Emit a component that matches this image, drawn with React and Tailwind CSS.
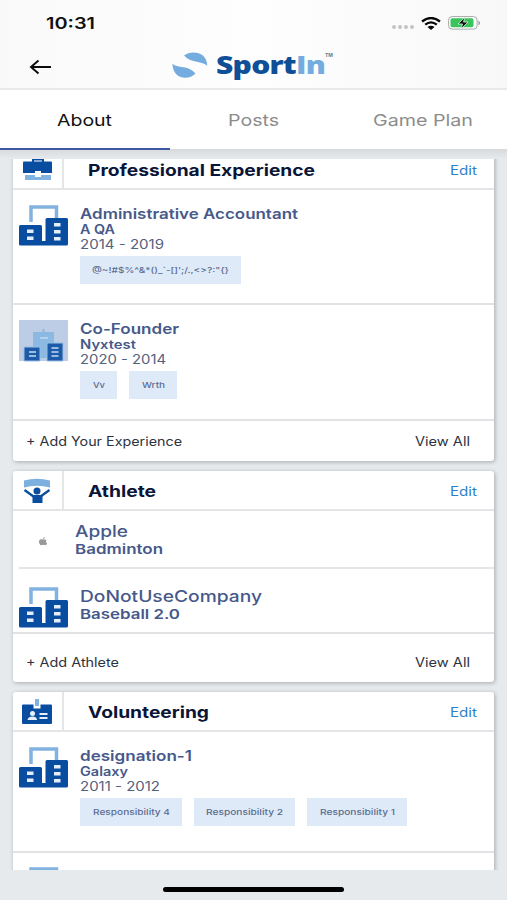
import { useLayoutEffect, useRef, useState } from 'react';

/**
 * Wide: single line of text stretched to the width of its box.
 */
const Wide = ({ className = '', children }) => {
  const boxRef = useRef(null);
  const textRef = useRef(null);
  const [scale, setScale] = useState(1);

  useLayoutEffect(() => {
    setScale(boxRef.current.offsetWidth / textRef.current.getBoundingClientRect().width);
  }, []);

  return (
    <span ref={boxRef} className={`block whitespace-nowrap ${className}`}>
      <span
        ref={textRef}
        className="inline-block origin-left"
        style={{ transform: `scaleX(${scale})` }}
      >
        {children}
      </span>
    </span>
  );
};

const BuildingIcon = () => (
  <svg width="50" height="42" viewBox="0 0 50 42" className="shrink-0">
    <path d="M12 17V2h25.500v12" fill="none" stroke="#82b2df" strokeWidth="3.500" />
    <path
      d="M1.500 20h20a1.500 1.500 0 0 1 1.500 1.500V36h3.500V14.500a1.500 1.500 0 0 1 1.500-1.500h19.500a1.500 1.500 0 0 1 1.500 1.500v24.500a1.500 1.500 0 0 1-1.500 1.500H1.500A1.500 1.500 0 0 1 0 39V21.500a1.500 1.500 0 0 1 1.500-1.500z"
      fill="#084d9f"
    />
    <path
      d="M8 24.500h6.500V28H8zM8 31.500h6.500V35H8zM35 18h6.500v3.500H35zM35 25h6.500v3.500H35zM35 32h6.500v3.500H35z"
      fill="#e4eefa"
    />
  </svg>
);

const CompanyPhoto = () => (
  <svg width="50" height="42" viewBox="0 0 50 42" className="shrink-0">
    <rect width="49" height="41" fill="#bccde5" />
    <path d="M14 12h9.500V9h2v3H35v26H14z" fill="#8bb9e2" />
    <path d="M21 18h8" stroke="#c3daf0" strokeWidth="1.500" />
    <path d="M5 27h16v14H5zM28 23h16v18H28z" fill="#1d5ba8" stroke="#9bbfe4" />
    <path d="M10 32h7M10 36h7M32.500 28h7M32.500 32h7M32.500 36h7" stroke="#c5dbf2" strokeWidth="1.300" />
  </svg>
);

const AppleIcon = () => (
  <svg width="10" height="9" viewBox="0 0 10 9" className="mt-1">
    <path
      d="M8.700 3.200C7.700 2.100 6.300 2.400 5.200 2.600 3.800 2 1.300 2.100 1 4.400 0.800 6.200 2 8.200 3.300 8.200c.8 0 1.100-.4 1.900-.4s1.100.4 1.900.4c.9 0 1.600-1 2-2C7.600 5.500 7.700 3.800 8.700 3.200zM5 2.100C5 1 5.800.4 7 .300 7 1.400 6.200 2 5 2.100z"
      fill="#999"
    />
  </svg>
);

const BriefcaseIcon = () => (
  <svg width="30" height="24" viewBox="0 0 30 24" className="mt-0.5 ml-0.5">
    <path d="M10 4V1.500h10V4" fill="none" stroke="#084d9f" strokeWidth="2" />
    <path d="M1 3.500h27q1 0 1 1V15H18v-2h-6v2H0V4.500q0-1 1-1z" fill="#084d9f" />
    <path d="M2 17h10v2h6v-2h10v5H2z" fill="#82b2df" />
  </svg>
);

const AthleteIcon = () => (
  <svg width="28" height="26" viewBox="0 0 28 26" className="mt-0.5">
    <path d="M1 2.500q13-3.500 26 0v7q-13-3.500-26 0z" fill="#7db0df" />
    <circle cx="14" cy="13" r="3.500" fill="#084d9f" />
    <path d="M1.500 12l9 6.500M26.500 12l-9 6.500" stroke="#084d9f" strokeWidth="2.200" />
    <path d="M8.500 17h11v8h-10v-6z" fill="#084d9f" />
  </svg>
);

const BadgeIcon = () => (
  <svg width="30" height="26" viewBox="0 0 30 26" className="mt-0.5">
    <path d="M1 5.500h10.500v4h7v-4H29q1 0 1 1V24q0 1-1 1H1q-1 0-1-1V6.500q0-1 1-1z" fill="#084d9f" />
    <path d="M13 0h4v7h-4z" fill="#82b2df" />
    <circle cx="10.500" cy="14.500" r="2.500" fill="#e6f0fb" />
    <path d="M5.500 21q.5-3.500 5-3.500t4.500 3.500zM17.500 14h8v2h-8zM17.500 18h8v2h-8z" fill="#e6f0fb" />
  </svg>
);

const CardHeader = ({ icon, title, width }) => (
  <div className="flex h-10 shrink-0 items-center border-b-2 border-[#e4e5e6]">
    <div className="flex h-full w-[51px] items-center justify-center border-r-2 border-[#e4e5e6] pr-px">{icon}</div>
    <Wide className={`mt-0.5 ml-6 text-[16px] font-bold text-[#0a1538] ${width}`}>{title}</Wide>
    <Wide className="mt-1 mr-[17px] ml-auto w-[27px] text-[12.500px] text-[#2e7fc9]">Edit</Wide>
  </div>
);

const CardFooter = ({ label, width, height }) => (
  <div className={`flex items-center justify-between pr-6 pl-[13px] text-[12.500px] text-[#2c3340] ${height}`}>
    <Wide className={width}>{label}</Wide>
    <Wide className="w-[55px]">View All</Wide>
  </div>
);

const Experience = ({ logo, title, company, dates, tags, height }) => (
  <div className={`flex border-b-2 border-[#e0e2e3] pt-[15px] pl-1.5 ${height}`}>
    {logo}
    <div className="ml-[11px] text-[#46598a]">
      <Wide className={`text-[14.500px] leading-[17px] font-semibold ${title[1]}`}>{title[0]}</Wide>
      <Wide className={`text-[12.500px] leading-[15px] font-semibold ${company[1]}`}>{company[0]}</Wide>
      <Wide className={`text-[12.500px] leading-[15px] text-[#56617d] ${dates[1]}`}>{dates[0]}</Wide>
      <div className="mt-1 flex gap-3">
        {tags.map(([label, width, tagWidth]) => (
          <div key={label} className={`flex h-7 items-center justify-center bg-[#deeaf8] ${tagWidth}`}>
            <Wide className={`text-[8px] font-medium text-[#5c6d90] ${width}`}>{label}</Wide>
          </div>
        ))}
      </div>
    </div>
  </div>
);

const StatusBar = () => (
  <div className="flex h-[46px] items-center pr-[26px] pl-[46px]">
    <Wide className="w-[49px] text-[16px] font-semibold text-[#111]">10:31</Wide>
    <div className="mt-2 ml-auto flex gap-[2px]">
      {[0, 1, 2, 3].map((dot) => (
        <span key={dot} className="h-1 w-1 rounded-full bg-[#c4c4c4]" />
      ))}
    </div>
    <svg width="20" height="13" viewBox="0 0 20 13" className="ml-[7px]">
      <path d="M1 4.500q9-7 18 0M4.200 7.600q5.800-4.500 11.600 0" fill="none" stroke="#080808" strokeWidth="2.300" />
      <path d="M6.500 10q3.500-2.500 7 0L10 13z" fill="#080808" />
    </svg>
    <svg width="33" height="14" viewBox="0 0 33 14" className="ml-[7px]">
      <rect x=".6" y=".6" width="28.500" height="12.500" rx="3.500" fill="#fff" stroke="#a5a8a6" />
      <rect x="2.500" y="2.300" width="23" height="9" rx="1.800" fill="#3ac45c" />
      <path d="M30.500 4.500q3 2.500 0 5z" fill="#909391" />
      <path d="M17 1l-7 7h4.500L13 13l7-7h-4.500z" fill="#101010" stroke="#d9f5df" strokeWidth=".8" />
    </svg>
  </div>
);

const Header = () => (
  <div className="h-[90px] shrink-0 border-b-2 border-[#e9e9e9] bg-gradient-to-r from-[#f9f9f9] via-[#fefefe] to-[#f8f8f8]">
    <StatusBar />
    <div className="flex h-[42px] items-center pl-[29px]">
      <svg width="23" height="16" viewBox="0 0 23 16" className="-mt-px shrink-0">
        <path d="M9.500 1.500L2 8l7.500 6.500M2 8h20" fill="none" stroke="#0b0b0b" strokeWidth="1.900" />
      </svg>
      <svg width="36" height="28" viewBox="0 0 36 28" className="-mt-1 ml-[120px] shrink-0">
        <path d="M12 4.500C19-1 35 0 35.300 14.800 30 9.500 20 13 12 4.500z" fill="#75acdf" />
        <path d="M.300 12.500C6 18 16 13.500 23.500 22.500 17 29.500 1 29 .300 12.500z" fill="#75acdf" />
      </svg>
      <Wide className="-mt-[7px] ml-2 w-[109px] font-['Open_Sans',sans-serif] text-[25px] leading-[36px] font-extrabold tracking-tight text-[#0e4f97]">
        Sport<span className="text-[#75acdf]">In</span>
      </Wide>
      <Wide className="-mt-[25px] w-[8px] text-[5px] leading-[8px] font-bold text-[#5f8490]">TM</Wide>
    </div>
  </div>
);

const Tabs = () => (
  <div className="flex h-[60px] shrink-0 border-b border-[#dadada] bg-white text-[16.500px] text-[#8c8c8c]">
    <div className="-mb-px flex w-[170px] items-center justify-center border-b-2 border-[#4057a5] text-[#111]">
      <Wide className="mt-0.5 mr-px w-[55px]">About</Wide>
    </div>
    <div className="flex w-[168px] items-center justify-center">
      <Wide className="mt-px mr-0.5 w-[51px]">Posts</Wide>
    </div>
    <div className="flex w-[169px] items-center justify-center">
      <Wide className="mt-px w-[100px]">Game Plan</Wide>
    </div>
  </div>
);

const Card = ({ children }) => (
  <div className="rounded-[3px] bg-white shadow-[1px_1px_4px_rgba(0,0,0,0.28)]">{children}</div>
);

const App = () => (
  <div className="flex h-[900px] w-[507px] flex-col overflow-hidden bg-[#e7eaed] font-[Inter,sans-serif]">
    <Header />
    <Tabs />
    <div className="h-[9px] shrink-0 bg-gradient-to-b from-[#d9dcdf] to-[#e7eaed]" />

    <div className="h-[711px] shrink-0 overflow-hidden px-[13px]">
      <div className="-mt-[9px] flex flex-col gap-[10px]">
        <Card>
          <CardHeader icon={<BriefcaseIcon />} title="Professional Experience" width="w-[227px]" />
          <Experience
            logo={<BuildingIcon />}
            title={['Administrative Accountant', 'w-[218px]']}
            company={['A QA', 'w-[35px]']}
            dates={['2014 - 2019', 'w-[84px]']}
            tags={[['@~!#$%^&*()_`-[]\';/.,<>?:"{}', 'w-[137px]', 'w-[161px]']]}
            height="h-[115px]"
          />
          <Experience
            logo={<CompanyPhoto />}
            title={['Co-Founder', 'w-[99px]']}
            company={['Nyxtest', 'w-[56px]']}
            dates={['2020 - 2014', 'w-[86px]']}
            tags={[
              ['Vv', 'w-[12px]', 'w-[37px]'],
              ['Wrth', 'w-[23px]', 'w-[48px]'],
            ]}
            height="h-[116px]"
          />
          <CardFooter label="+ Add Your Experience" width="w-[156px]" height="h-10 pt-0.5" />
        </Card>

        <Card>
          <CardHeader icon={<AthleteIcon />} title="Athlete" width="w-[68px]" />
          <div className="ml-1.5 flex h-[58px] items-center border-b-2 border-[#e3e5e6] pl-[19px] text-[#46598a]">
            <AppleIcon />
            <div className="ml-[27px]">
              <Wide className="w-[53px] text-[16px] leading-[19px] font-medium">Apple</Wide>
              <Wide className="w-[88px] text-[13.500px] leading-[16px] font-semibold">Badminton</Wide>
            </div>
          </div>
          <div className="flex h-[65px] items-start border-b-2 border-[#e0e2e3] pt-[18px] pl-1.5 text-[#46598a]">
            <BuildingIcon />
            <div className="ml-[11px]">
              <Wide className="w-[182px] text-[16px] leading-[19px] font-medium">DoNotUseCompany</Wide>
              <Wide className="w-[100px] text-[13.500px] leading-[17px] font-semibold">Baseball 2.0</Wide>
            </div>
          </div>
          <CardFooter label="+ Add Athlete" width="w-[93px]" height="h-12 pt-2.5" />
        </Card>

        <Card>
          <CardHeader icon={<BadgeIcon />} title="Volunteering" width="w-[121px]" />
          <Experience
            logo={<BuildingIcon />}
            title={['designation-1', 'w-[112px]']}
            company={['Galaxy', 'w-[48px]']}
            dates={['2011 - 2012', 'w-[80px]']}
            tags={[
              ['Responsibility 4', 'w-[77px]', 'w-[102px]'],
              ['Responsibility 2', 'w-[77px]', 'w-[101px]'],
              ['Responsibility 1', 'w-[75px]', 'w-[100px]'],
            ]}
            height="h-[121px]"
          />
          <div className="pt-[14px] pl-1.5">
            <BuildingIcon />
          </div>
        </Card>
      </div>
    </div>

    <div className="flex flex-1 justify-center pt-[17px]">
      <div className="h-[5px] w-[181px] rounded-full bg-black" />
    </div>
  </div>
);

export default App;
